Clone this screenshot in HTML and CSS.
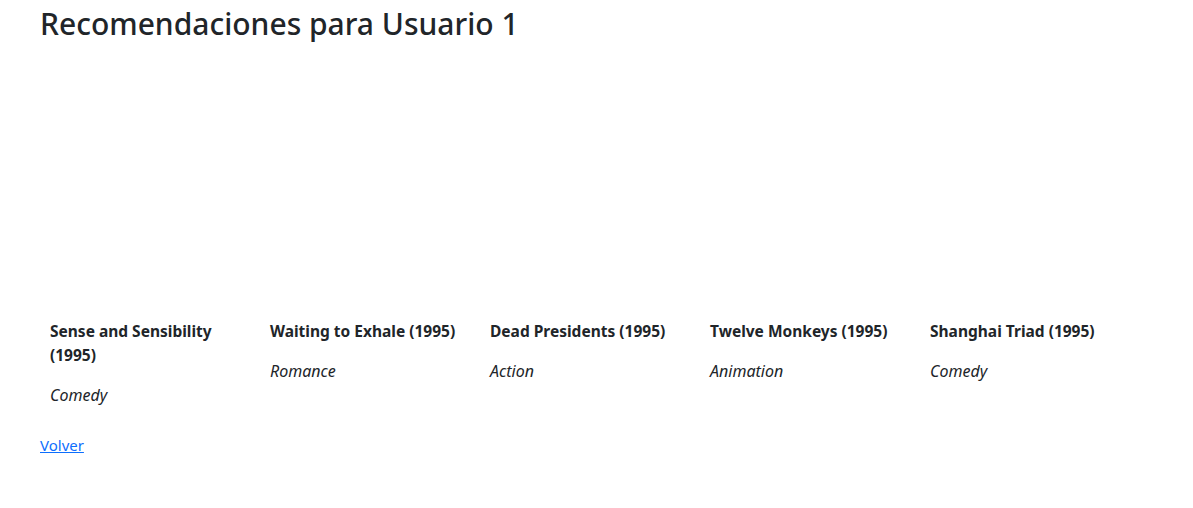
FILE: index.html
```html
<!DOCTYPE html>
<html lang="es">
<head>
<meta charset="utf-8">
<title>Recomendaciones</title>
<link rel="stylesheet" href="styles.css">
</head>
<body>
<main class="page">
  <h1 class="title">Recomendaciones para Usuario 1</h1>
  <div class="movies">
    <div class="movie">
      <div class="poster"></div>
      <div class="movie-body">
        <h5 class="movie-title">Sense and Sensibility (1995)</h5>
        <p class="movie-genre">Comedy</p>
      </div>
    </div>
    <div class="movie">
      <div class="poster"></div>
      <div class="movie-body">
        <h5 class="movie-title">Waiting to Exhale (1995)</h5>
        <p class="movie-genre">Romance</p>
      </div>
    </div>
    <div class="movie">
      <div class="poster"></div>
      <div class="movie-body">
        <h5 class="movie-title">Dead Presidents (1995)</h5>
        <p class="movie-genre">Action</p>
      </div>
    </div>
    <div class="movie">
      <div class="poster"></div>
      <div class="movie-body">
        <h5 class="movie-title">Twelve Monkeys (1995)</h5>
        <p class="movie-genre">Animation</p>
      </div>
    </div>
    <div class="movie">
      <div class="poster"></div>
      <div class="movie-body">
        <h5 class="movie-title">Shanghai Triad (1995)</h5>
        <p class="movie-genre">Comedy</p>
      </div>
    </div>
  </div>
  <a class="back" href="#">Volver</a>
</main>
</body>
</html>
```

FILE: styles.css
```css
* { box-sizing: border-box; }
html, body { margin: 0; padding: 0; background: #fff; }
body {
  font-family: "Noto Sans", "Open Sans", sans-serif;
  font-size: 16px;
  line-height: 1.5;
  color: #212529;
}
.page {
  padding: 5px 40px 20px;
}
.title {
  margin: 0 0 8px;
  font-size: 30px;
  font-weight: 550;
  line-height: 38px;
}
.movies {
  display: grid;
  grid-template-columns: repeat(5, 220px);
  margin-top: 8px;
}
.movie {
  display: flex;
  flex-direction: column;
}
.poster {
  height: 258px;
}
.movie-body {
  padding: 10px;
}
.movie-title {
  margin: 0 0 16px;
  font-size: 15.5px;
  font-weight: 700;
  line-height: 24px;
}
.movie-genre {
  margin: 0;
  font-style: italic;
  font-size: 16px;
  line-height: 24px;
}
.back {
  display: inline-block;
  margin-top: 16px;
  color: #0d6efd;
  text-decoration: underline;
  font-size: 15px;
  line-height: 24px;
}
```
